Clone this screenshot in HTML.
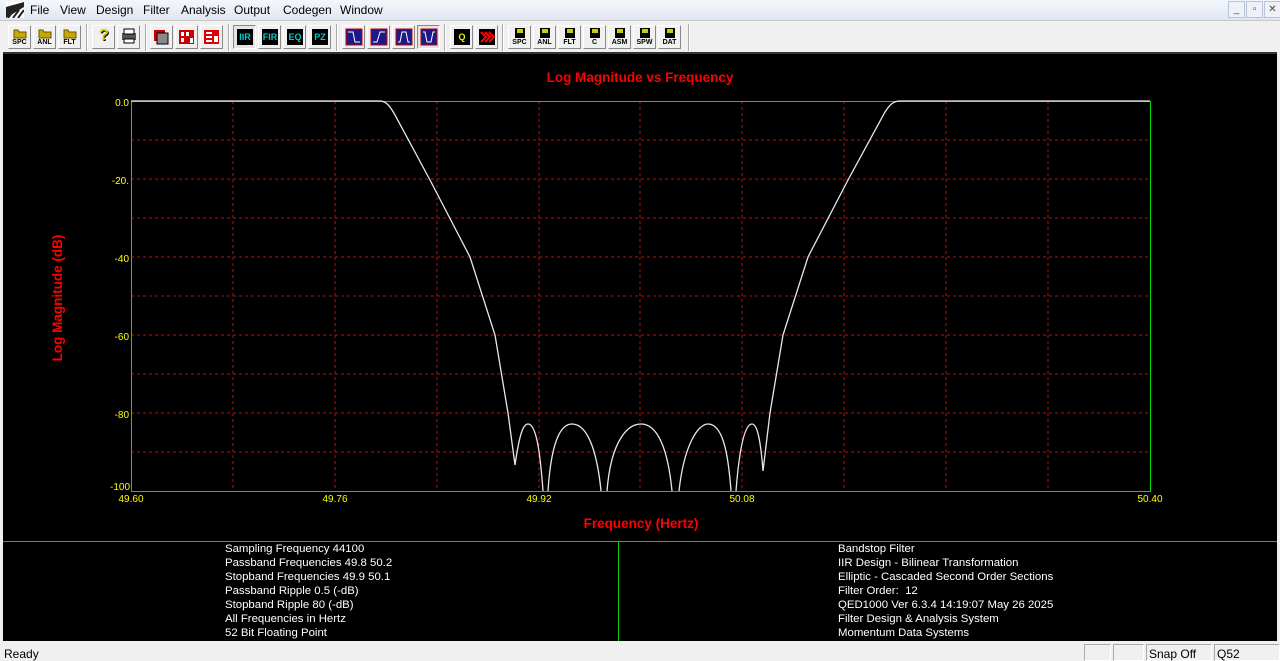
<!DOCTYPE html>
<html><head><meta charset="utf-8"><style>
*{margin:0;padding:0;box-sizing:border-box}
body{width:1280px;height:661px;overflow:hidden;background:#f0f0f0;font-family:"Liberation Sans",Arial,sans-serif;position:relative}
#menu{position:absolute;left:0;top:0;width:1280px;height:20px;background:linear-gradient(#f4f6fb,#dfe6f3);font-size:12px}
#menu span{position:absolute;top:3px;color:#000}
#tb{position:absolute;left:0;top:20px;width:1280px;height:32px;background:#f0f0f0;border-top:1px solid #c8c8c8}
.b{position:absolute;top:4px;width:23px;height:24px;border:1px solid #fff;border-right-color:#888;border-bottom-color:#888;background:#f0f0f0}
.b.p{border-color:#888 #fff #fff #888;background:#e4e4e4}
.lbl{position:absolute;bottom:1px;left:0;width:100%;text-align:center;font-size:7px;font-weight:bold;color:#000;line-height:8px}
.blk{position:absolute;left:3px;top:3px;width:16px;height:16px;background:#000;color:#0cc;font-size:9px;font-weight:bold;text-align:center;line-height:16px}
.sep{position:absolute;top:3px;width:2px;height:27px;border-left:1px solid #aaa;border-right:1px solid #fff}
#main{position:absolute;left:3px;top:52px;width:1274px;height:589px;background:#000;border-top:2px solid #333}
#status{position:absolute;left:0;top:643px;width:1280px;height:18px;font-size:12px}
.sb{position:absolute;top:1px;height:17px;border:1px solid #aaa;border-right-color:#fff;border-bottom-color:#fff;padding:2px 2px}
.info{position:absolute;color:#fff;font-size:11.4px;line-height:14px}
.wb{position:absolute;top:1px;width:17px;height:17px;border:1px solid #b8c4d8;background:#eef2f8;font-size:10px;text-align:center;line-height:15px;color:#444}
</style></head><body>
<div id="menu">
<svg style="position:absolute;left:6px;top:2px" width="18" height="16"><rect width="18" height="16" fill="#fff"/><path d="M0 5 L18 0 V5 L0 16Z" fill="#222"/><path d="M2 16 L8 8 M7 16 L13 8 M12 16 L18 8" stroke="#222" stroke-width="2"/></svg>
<span style="left:30px">File</span><span style="left:60px">View</span><span style="left:96px">Design</span><span style="left:143px">Filter</span><span style="left:181px">Analysis</span><span style="left:234px">Output</span><span style="left:283px">Codegen</span><span style="left:340px">Window</span>
<div class="wb" style="left:1228px">_</div><div class="wb" style="left:1246px">▫</div><div class="wb" style="left:1264px">✕</div>
</div>
<div id="tb">
<div class="b" style="left:8px"><svg width="21" height="12"><path d="M5 3h4l1 2h7v6H5z" fill="#c8a800" stroke="#665500"/></svg><div class="lbl">SPC</div></div>
<div class="b" style="left:33px"><svg width="21" height="12"><path d="M5 3h4l1 2h7v6H5z" fill="#c8a800" stroke="#665500"/></svg><div class="lbl">ANL</div></div>
<div class="b" style="left:58px"><svg width="21" height="12"><path d="M5 3h4l1 2h7v6H5z" fill="#c8a800" stroke="#665500"/></svg><div class="lbl">FLT</div></div>
<div class="sep" style="left:86px"></div>
<div class="b" style="left:92px"><div style="position:absolute;left:6px;top:1px;font-weight:bold;font-size:16px;color:#cc0;text-shadow:1px 1px #000">?</div></div>
<div class="b" style="left:117px"><svg width="21" height="22"><rect x="4" y="7" width="14" height="7" fill="#555"/><rect x="6" y="3" width="10" height="5" fill="#fff" stroke="#000"/><rect x="6" y="13" width="10" height="4" fill="#fff" stroke="#000"/></svg></div>
<div class="sep" style="left:145px"></div>
<div class="b" style="left:150px"><svg width="21" height="22"><rect x="3" y="4" width="11" height="11" fill="#c00"/><rect x="6" y="7" width="11" height="11" fill="#888" stroke="#000"/></svg></div>
<div class="b" style="left:175px"><svg width="21" height="22"><rect x="3" y="4" width="15" height="14" fill="#c00"/><path d="M5 6h3v4H5zM10 6h3v4h-3zM5 12h3v4H5zM14 12h3v5h-3z" fill="#fff"/></svg></div>
<div class="b" style="left:200px"><svg width="21" height="22"><rect x="3" y="4" width="15" height="14" fill="#d00"/><path d="M5 6h6v2H5zM5 10h6v2H5zM5 14h6v2H5zM13 10h4v6h-4z" fill="#fff"/></svg></div>
<div class="sep" style="left:228px"></div>
<div class="b p" style="left:233px"><div class="blk">IIR</div></div>
<div class="b" style="left:258px"><div class="blk">FIR</div></div>
<div class="b" style="left:283px"><div class="blk">EQ</div></div>
<div class="b" style="left:308px"><div class="blk">PZ</div></div>
<div class="sep" style="left:336px"></div>
<div class="b" style="left:342px"><svg width="21" height="22"><rect x="3" y="3" width="16" height="16" fill="#1a1a8a" stroke="#c00"/><path d="M5 6h5l2 10h5" stroke="#fff" fill="none"/></svg></div>
<div class="b" style="left:367px"><svg width="21" height="22"><rect x="3" y="3" width="16" height="16" fill="#1a1a8a" stroke="#c00"/><path d="M5 16h4l3-10h5" stroke="#fff" fill="none"/></svg></div>
<div class="b" style="left:392px"><svg width="21" height="22"><rect x="3" y="3" width="16" height="16" fill="#1a1a8a" stroke="#c00"/><path d="M5 16h2l2-10h4l2 10h2" stroke="#fff" fill="none"/></svg></div>
<div class="b p" style="left:417px"><svg width="21" height="22"><rect x="3" y="3" width="16" height="16" fill="#1a1a8a" stroke="#c00"/><path d="M5 6h2l2 10h4l2-10h2" stroke="#fff" fill="none"/></svg></div>
<div class="sep" style="left:444px"></div>
<div class="b" style="left:450px"><div class="blk" style="color:#ee0">Q</div></div>
<div class="b" style="left:475px"><svg width="21" height="22"><rect x="3" y="3" width="16" height="16" fill="#000"/><path d="M5 6l5 5-5 5M9 6l5 5-5 5M13 6l5 5-5 5" stroke="#f00" stroke-width="2" fill="none"/></svg></div>
<div class="sep" style="left:502px"></div>
<div class="b" style="left:508px"><svg width="21" height="12"><rect x="6" y="1" width="10" height="10" fill="#000"/><rect x="8" y="2" width="6" height="4" fill="#cc0"/></svg><div class="lbl">SPC</div></div>
<div class="b" style="left:533px"><svg width="21" height="12"><rect x="6" y="1" width="10" height="10" fill="#000"/><rect x="8" y="2" width="6" height="4" fill="#cc0"/></svg><div class="lbl">ANL</div></div>
<div class="b" style="left:558px"><svg width="21" height="12"><rect x="6" y="1" width="10" height="10" fill="#000"/><rect x="8" y="2" width="6" height="4" fill="#cc0"/></svg><div class="lbl">FLT</div></div>
<div class="b" style="left:583px"><svg width="21" height="12"><rect x="6" y="1" width="10" height="10" fill="#000"/><rect x="8" y="2" width="6" height="4" fill="#cc0"/></svg><div class="lbl">C</div></div>
<div class="b" style="left:608px"><svg width="21" height="12"><rect x="6" y="1" width="10" height="10" fill="#000"/><rect x="8" y="2" width="6" height="4" fill="#cc0"/></svg><div class="lbl">ASM</div></div>
<div class="b" style="left:633px"><svg width="21" height="12"><rect x="6" y="1" width="10" height="10" fill="#000"/><rect x="8" y="2" width="6" height="4" fill="#cc0"/></svg><div class="lbl">SPW</div></div>
<div class="b" style="left:658px"><svg width="21" height="12"><rect x="6" y="1" width="10" height="10" fill="#000"/><rect x="8" y="2" width="6" height="4" fill="#cc0"/></svg><div class="lbl">DAT</div></div>
<div class="sep" style="left:688px"></div>
</div>
<div id="main"></div>
<svg style="position:absolute;left:0;top:0" width="1280" height="661" font-family="Liberation Sans,Arial,sans-serif">
<g stroke="#e00000" stroke-dasharray="3,3" stroke-width="1">
<path d="M233 101V491M335 101V491M437 101V491M539 101V491M640 101V491M742 101V491M844 101V491M946 101V491M1048 101V491"/>
<path d="M131 140H1150M131 179H1150M131 218H1150M131 257H1150M131 296H1150M131 335H1150M131 374H1150M131 413H1150M131 452H1150"/>
</g>
<rect x="131.5" y="101.5" width="1019" height="390" fill="none" stroke="#00e000"/>
<path d="M131 101H380 C386 101 390 106 395 115 L430 180 L470 257 L495 335 L508 413 L515 465 C520 430 524 424 528 424 C536 424 540 450 543 491 M548 491 C552 430 565 424 572 424 C590 424 598 460 601 491 M607 491 C611 440 628 424 641 424 C658 424 668 450 672 491 M679 491 C684 445 698 424 708 424 C722 424 728 450 731 491 M736 491 C740 440 746 424 752 424 C758 424 761 445 763 471 L770 413 L783 335 L808 257 L848 180 L885 112 C890 104 894 101 900 101 H1150" stroke="#e8e8e8" stroke-width="1.3" fill="none"/>
<g fill="#ffff00" font-size="10" text-anchor="end">
<text x="129" y="106">0.0</text><text x="129" y="184">-20.</text><text x="129" y="262">-40</text><text x="129" y="340">-60</text><text x="129" y="418">-80</text><text x="130" y="490">-100</text>
</g>
<g fill="#ffff00" font-size="10" text-anchor="middle">
<text x="131" y="502">49.60</text><text x="335" y="502">49.76</text><text x="539" y="502">49.92</text><text x="742" y="502">50.08</text><text x="1150" y="502">50.40</text>
</g>
<g fill="#ff0000" font-weight="bold" font-size="13.5" text-anchor="middle">
<text x="640" y="82">Log Magnitude vs Frequency</text>
<text x="641" y="528">Frequency (Hertz)</text>
<text transform="translate(62,298) rotate(-90)">Log Magnitude (dB)</text>
</g>
<path d="M3 541.5H1277M618.5 541V641" stroke="#00d000"/>
</svg>
<div class="info" style="left:225px;top:542px">Sampling Frequency 44100<br>Passband Frequencies 49.8 50.2<br>Stopband Frequencies 49.9 50.1<br>Passband Ripple 0.5 (-dB)<br>Stopband Ripple 80 (-dB)<br>All Frequencies in Hertz<br>52 Bit Floating Point</div>
<div class="info" style="left:838px;top:542px">Bandstop Filter<br>IIR Design - Bilinear Transformation<br>Elliptic - Cascaded Second Order Sections<br>Filter Order:&nbsp; 12<br>QED1000 Ver 6.3.4 14:19:07 May 26 2025<br>Filter Design &amp; Analysis System<br>Momentum Data Systems</div>
<div id="status">
<span style="position:absolute;left:4px;top:4px">Ready</span>
<div class="sb" style="left:1084px;width:27px"></div>
<div class="sb" style="left:1113px;width:31px"></div>
<div class="sb" style="left:1146px;width:66px">Snap Off</div>
<div class="sb" style="left:1214px;width:66px">Q52</div>
</div>
</body></html>
